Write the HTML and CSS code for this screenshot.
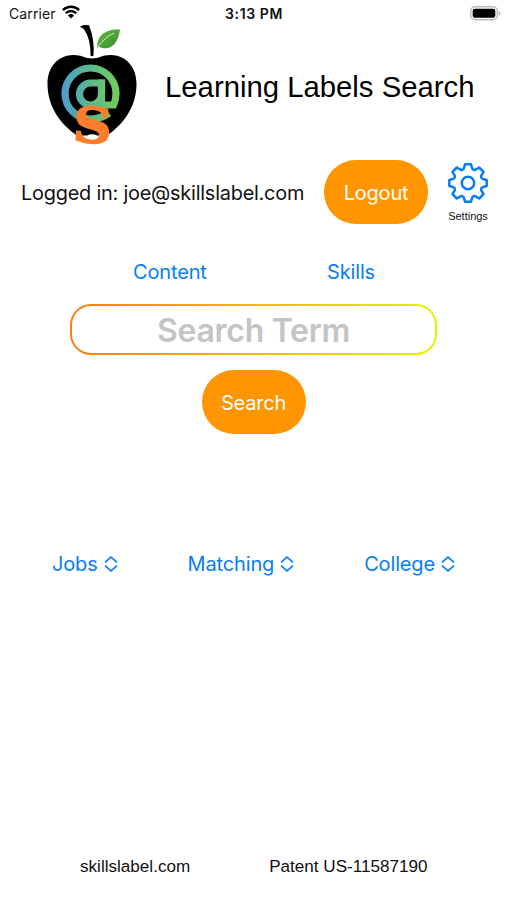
FILE: index.html
```html
<!DOCTYPE html>
<html lang="en">
<head>
<meta charset="utf-8">
<title>Learning Labels Search</title>
<link rel="stylesheet" href="styles.css">
</head>
<body>
<div class="status">
  <div class="carrier"><span>Carrier</span>
    <svg width="18" height="14" viewBox="0 0 18 14" fill="none" stroke="#000" stroke-width="2.3"><path d="M.9 5.1a11.5 11.5 0 0 1 16.2 0M3.8 8.2a7.4 7.4 0 0 1 10.4 0"/><path d="M9 13.6 5.9 10.4a4.6 4.6 0 0 1 6.2 0z" fill="#000" stroke="none"/></svg>
  </div>
  <time>3:13 PM</time>
  <svg class="battery" width="31" height="15" viewBox="0 0 31 15"><rect x=".8" y=".8" width="26.4" height="13" rx="4" fill="#fff" stroke="#bbb" stroke-width="1.4"/><rect x="2.7" y="2.8" width="22.6" height="9" rx="2" /><path d="M28.6 5q2 .7 2 2.4t-2 2.4z" fill="#bbb"/></svg>
</div>
<header class="header">
  <svg class="logo" width="105" height="130" viewBox="0 0 105 130">
    <defs>
      <linearGradient id="at" gradientUnits="userSpaceOnUse" x1="21" y1="0" x2="80" y2="0"><stop offset="0" stop-color="#4a9bd0"/><stop offset=".5" stop-color="#5cb98e"/><stop offset="1" stop-color="#72cf55"/></linearGradient>
      <linearGradient id="leaf" x1="0" y1="0" x2="1" y2="1"><stop offset="0" stop-color="#6cbd43"/><stop offset="1" stop-color="#2f8b2c"/></linearGradient>
    </defs>
    <path d="M52 38.500C45 38.500 42 35 33.500 35C18 35 7.500 47 7.500 64C7.500 86 20 104 37 115.500H47Q52 113 57 115.500H67C84 104 96.500 86 96.500 64C96.500 47 86 35 70.500 35C62 35 59 38.500 52 38.500Z"/>
    <path d="M40.500 6.200Q44 4.600 49 5.300Q54.800 20 53.500 35.500Q52 36.700 50.500 35.500Q51 20 44.500 10Q42.500 7.500 40.500 7.200Z"/>
    <path d="M57.500 28.500C56 17 64 8.500 80 9.500C78 25 69 32 58.500 26.500Z" fill="url(#leaf)"/>
    <path d="M57 29Q62 19 74 13" fill="none" stroke="#d7efce" stroke-width=".9"/>
    <g fill="none" stroke="url(#at)" stroke-width="7.200">
      <path d="M61.500 59.500V85H73.500Q76 80 76 73.500A25.500 25.500 0 1 0 50.500 99Q61 99 69 93"/>
      <path d="M61.500 63H50.500A11 11 0 1 0 61.500 74Z"/>
    </g>
    <text class="mark" transform="translate(51.500 122.500) rotate(4) scale(1.100 1)">S</text>
  </svg>
  <h1>Learning Labels Search</h1>
</header>
<section class="account">
  <span class="user">Logged in: joe@skillslabel.com</span>
  <button class="pill logout">Logout</button>
  <div class="settings">
    <svg width="42" height="42" viewBox="-21 -21 42 42" fill="none" stroke="#087df5" stroke-width="2.500" stroke-linejoin="round"><circle r="6.200"/><path d="M-3-18.700H3L4-15.200A2.400 2.400 0 0 0 7.900-13.600L11.200-15.500L15.500-11.200L13.600-7.900A2.400 2.400 0 0 0 15.200-4L18.700-3V3L15.200 4A2.400 2.400 0 0 0 13.600 7.900L15.500 11.200L11.200 15.500L7.900 13.600A2.400 2.400 0 0 0 4 15.200L3 18.700H-3L-4 15.200A2.400 2.400 0 0 0-7.900 13.600L-11.200 15.500L-15.500 11.200L-13.600 7.900A2.400 2.400 0 0 0-15.200 4L-18.700 3V-3L-15.200-4A2.400 2.400 0 0 0-13.600-7.900L-15.500-11.200L-11.200-15.500L-7.900-13.600A2.400 2.400 0 0 0-4-15.200Z"/></svg>
    <span>Settings</span>
  </div>
</section>
<nav class="tabs"><a class="content">Content</a><a class="skills">Skills</a></nav>
<main class="search">
  <div class="field"><span>Search Term</span></div>
  <button class="pill go">Search</button>
</main>
<section class="menus">
  <a><span class="jobs">Jobs</span><svg width="14" height="16" viewBox="0 0 14 16"><path d="M1 6.300 7 1.200 13 6.300M1 9.700 7 14.800 13 9.700"/></svg></a>
  <a><span class="matching">Matching</span><svg width="14" height="16" viewBox="0 0 14 16"><path d="M1 6.300 7 1.200 13 6.300M1 9.700 7 14.800 13 9.700"/></svg></a>
  <a><span class="college">College</span><svg width="14" height="16" viewBox="0 0 14 16"><path d="M1 6.300 7 1.200 13 6.300M1 9.700 7 14.800 13 9.700"/></svg></a>
</section>
<footer class="footer"><span>skillslabel.com</span><span>Patent US-11587190</span></footer>
</body>
</html>
```
FILE: styles.css
```css
* { box-sizing: border-box; }
body { margin: 0; width: 507px; height: 900px; background: #fff; color: #111; font-family: Inter, sans-serif; display: flex; flex-direction: column; overflow: hidden; }
.status { height: 20px; margin-top: 3px; padding: 0 6px 0 9px; display: grid; grid-template-columns: 1fr auto 1fr; align-items: center; font-size: 14px; }
.carrier { display: flex; align-items: center; gap: 6px; letter-spacing: .1px; }
.carrier svg { margin-top: -2px; }
.status time { font-weight: 600; font-size: 14px; letter-spacing: .6px; margin-right: 2px; }
.battery { justify-self: end; margin-top: 1px; }
.header { height: 130px; margin-top: -3px; padding-left: 40px; display: flex; align-items: center; }
.logo { flex: none; overflow: visible; }
.mark { font: bold 49px "DejaVu Serif", serif; fill: #fb7d2b; stroke: #fb7d2b; stroke-width: 1.500px; text-anchor: middle; }
h1 { margin: 3px 0 0 20px; font: 400 29.300px "Liberation Sans", sans-serif; color: #000; white-space: nowrap; }
.account { height: 64px; margin-top: 10px; padding-left: 21px; display: flex; align-items: center; }
.user { width: 303px; padding-top: 2px; font-size: 19.900px; letter-spacing: -.22px; white-space: nowrap; }
.pill { height: 64px; padding: 2px 0 0; border: 0; border-radius: 32px; background: #ff9500; color: #fff; font-family: Inter, sans-serif; font-size: 20px; letter-spacing: -.2px; }
.logout { width: 104px; }
.settings { width: 42px; margin-left: 19px; margin-top: -1px; display: flex; flex-direction: column; align-items: center; font: 11px "Liberation Sans", sans-serif; gap: 6px; }
.tabs { height: 30px; margin-top: 33px; display: flex; align-items: center; color: #087df5; font-size: 20px; letter-spacing: -.15px; }
.content { width: 194px; margin-left: 133px; }
.search { margin-top: 17px; display: flex; flex-direction: column; align-items: center; gap: 15px; }
.field { width: 367px; height: 51px; padding: 2px; border-radius: 21px; background: linear-gradient(90deg, #fb7d18, #e0f500); }
.field span { height: 100%; padding-top: 1px; border-radius: 19px; background: #fff; display: flex; align-items: center; justify-content: center; font-size: 32px; letter-spacing: -.3px; font-weight: 600; color: #c4c4c4; }
.go { width: 104px; }
.menus { height: 30px; margin-top: 115px; padding: 0 52px; display: flex; justify-content: space-between; align-items: center; color: #087df5; font-size: 20px; letter-spacing: -.15px; }
.menus a { display: flex; align-items: center; gap: 6px; }
.menus svg { fill: none; stroke: currentColor; stroke-width: 1.700; }
.footer { margin-top: 277px; height: 22px; padding-left: 80px; display: flex; gap: 79px; align-items: center; font: 17.100px "Liberation Sans", sans-serif; }
```
